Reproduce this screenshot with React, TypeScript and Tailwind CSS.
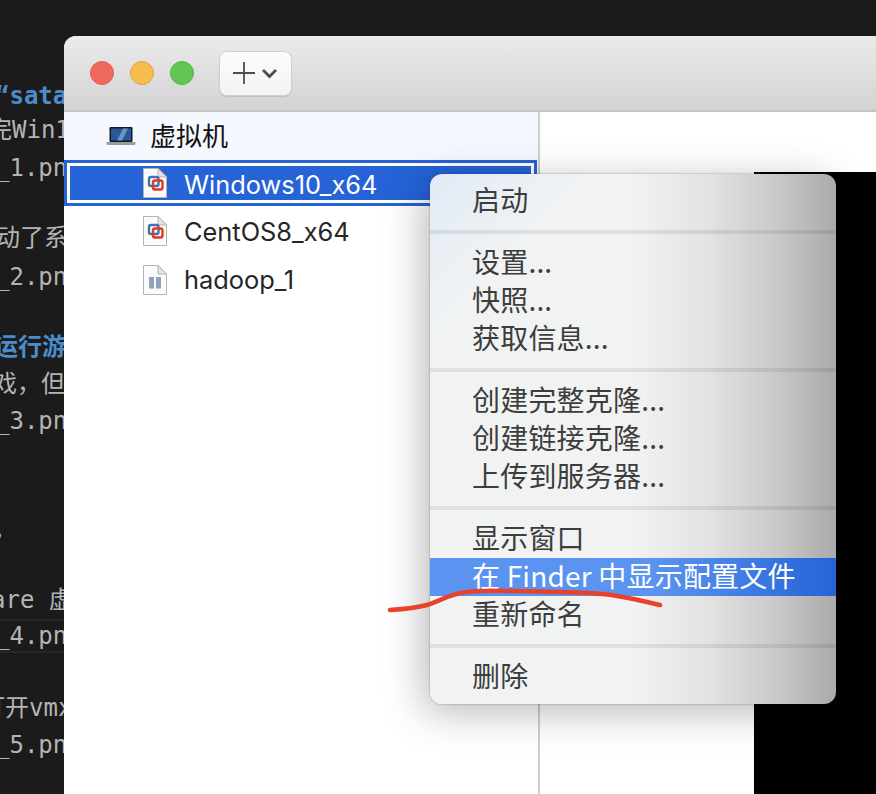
import React from "react";

const codeRows = [
  { text: "“sata", cls: "h-[34px] ml-[-5px] font-bold text-[#4a8dc8]" },
  { text: "完Win1", cls: "h-[38px] ml-[-12px] text-[#b4b4b4]" },
  { text: "_1.png", cls: "h-[70px] ml-[-5px] text-[#b4b4b4]" },
  { text: "动了系", cls: "h-[39px] ml-[-4px] text-[#b4b4b4]" },
  { text: "_2.png", cls: "h-[70px] ml-[-5px] text-[#b4b4b4]" },
  { text: "运行游", cls: "h-[37px] ml-[-6px] font-bold text-[#4a8dc8]" },
  { text: "戏，但", cls: "h-[37px] ml-[-7px] text-[#b4b4b4]" },
  { text: "_3.png", cls: "h-[109px] ml-[-5px] text-[#b4b4b4]" },
  { text: ",", cls: "h-[70px] ml-[-8px] text-[#b4b4b4]" },
  { text: "are 虚", cls: "h-[36px] ml-[-9px] text-[#b4b4b4]" },
  { text: "_4.png", cls: "h-[72px] ml-[-5px] text-[#b4b4b4]", current: true },
  { text: "打开vmx", cls: "h-[37px] ml-[-19px] text-[#b4b4b4]" },
  { text: "_5.png", cls: "h-[37px] ml-[-5px] text-[#b4b4b4]" },
];

const menuGroups = [
  ["启动"],
  ["设置...", "快照...", "获取信息..."],
  ["创建完整克隆...", "创建链接克隆...", "上传到服务器..."],
  ["显示窗口", "在 Finder 中显示配置文件", "重新命名"],
  ["删除"],
];

const FileIcon = ({ kind }: { kind: "vm" | "paused" }) => (
  <svg width="26" height="32" viewBox="0 0 26 32" className="shrink-0">
    <path d="M1.5 1.5H16L24.5 10V30.5H1.5Z" fill="#fbfbfb" stroke="#b4b4b4" />
    <path d="M16 1.5V10H24.5Z" fill="#e4e4e4" stroke="#b4b4b4" />
    {kind === "vm" ? (
      <>
        <rect x="7" y="10" width="9.5" height="9" rx="2" fill="none" stroke="#3f6fb5" strokeWidth="2.4" />
        <rect x="11" y="13.5" width="9.5" height="9" rx="2" fill="none" stroke="#e2391f" strokeWidth="2.4" />
      </>
    ) : (
      <>
        <rect x="7" y="13" width="5" height="11.5" fill="#8ea3be" />
        <rect x="14" y="13" width="5" height="11.5" fill="#8ea3be" />
      </>
    )}
  </svg>
);

const LaptopIcon = () => (
  <svg width="30" height="20" viewBox="0 0 30 20" className="shrink-0">
    <rect x="3.5" y="1" width="23" height="15" rx="1.2" fill="#14181f" />
    <rect x="5" y="2.5" width="20" height="12" fill="#27589c" />
    <path d="M11 14.5L17 2.5H22L16 14.5Z" fill="#6f93c0" />
    <path d="M0.5 16H29.5V17.5Q29.5 19 28 19H2Q0.5 19 0.5 17.5Z" fill="#9a9da0" />
  </svg>
);

const PlusChevron = () => (
  <svg width="46" height="24" viewBox="0 0 46 24" fill="none" stroke="#4c4c4c">
    <path d="M0 12H22M11 1V23" strokeWidth="1.8" />
    <path d="M30 9L36.5 15.5L43 9" strokeWidth="2.8" />
  </svg>
);

export default function App() {
  return (
    <div className="relative flex h-[794px] w-[876px] overflow-hidden bg-[#1b1b1b] font-['Noto_Sans_CJK_SC',sans-serif]">
      {/* editor behind the window */}
      <div className="w-[64px] shrink-0 overflow-hidden pt-[79px] font-['DejaVu_Sans_Mono','Noto_Sans_CJK_SC',monospace] text-[24px] leading-[34px]">
        {codeRows.map((row) => (
          <div key={row.text} className={`whitespace-nowrap ${row.cls}`}>
            {row.current ? (
              <div className="ml-[5px] h-[34px] border-y-2 border-[#262626] leading-[30px]">
                <span className="ml-[-5px]">{row.text}</span>
              </div>
            ) : (
              row.text
            )}
          </div>
        ))}
      </div>

      {/* vm window */}
      <div className="mt-[36px] flex w-[812px] shrink-0 flex-col overflow-hidden rounded-tl-[12px] bg-white">
        <div className="flex h-[76px] shrink-0 items-center border-b-2 border-[#c4c4c4] bg-gradient-to-b from-[#ebebeb] to-[#d3d3d3] pl-[26px]">
          <div className="h-[24px] w-[24px] rounded-full border border-[#e2594f] bg-[#f0695f]" />
          <div className="ml-[16px] h-[24px] w-[24px] rounded-full border border-[#e0a53c] bg-[#f6bd4f]" />
          <div className="ml-[16px] h-[24px] w-[24px] rounded-full border border-[#55b449] bg-[#62c655]" />
          <div className="ml-[25px] flex h-[45px] w-[73px] items-center justify-center rounded-[8px] border border-[#cfcfcf] bg-gradient-to-b from-[#fcfcfc] to-[#f3f3f3] shadow-[0_1px_1px_rgba(0,0,0,0.12)]">
            <PlusChevron />
          </div>
        </div>

        <div className="flex flex-1">
          <div className="w-[476px] shrink-0 border-r-2 border-[#cfcfcf] bg-white text-[26px] text-[#262626]">
            <div className="flex h-[48px] items-center bg-[#f5f8fe] pl-[42px]">
              <LaptopIcon />
              <span className="ml-[14px] pb-[2px] leading-[30px] text-[#111]">虚拟机</span>
            </div>
            <div className="mr-[1px] h-[46px] border-[3px] border-[#2563d6] bg-white p-[3px]">
              <div className="flex h-[34px] items-center bg-[#2563d6] pl-[72px] font-['Inter','Noto_Sans_CJK_SC',sans-serif] text-[25.4px] text-white">
                <FileIcon kind="vm" />
                <span className="ml-[16px] pt-[4px]">Windows10_x64</span>
              </div>
            </div>
            <div className="flex h-[50px] items-center pl-[78px] font-['Inter','Noto_Sans_CJK_SC',sans-serif] text-[25.4px]">
              <FileIcon kind="vm" />
              <span className="ml-[16px] pt-[3px]">CentOS8_x64</span>
            </div>
            <div className="flex h-[48px] items-center pl-[78px] font-['Inter','Noto_Sans_CJK_SC',sans-serif] text-[25.4px]">
              <FileIcon kind="paused" />
              <span className="ml-[16px]">hadoop_1</span>
            </div>
          </div>
          <div className="flex flex-1 flex-col pl-[214px] pt-[60px]">
            <div className="flex-1 bg-black" />
          </div>
        </div>
      </div>

      {/* context menu */}
      <div className="absolute left-[430px] top-[174px] w-[406px] rounded-[12px] bg-[linear-gradient(135deg,rgba(222,232,248,0.8)_0%,rgba(240,243,243,0)_18%),linear-gradient(to_right,#f1f3f3_0%,#f1f3f3_50%,#e2e3e3_68%,#c9cac9_85%,#a9aaa9_100%)] py-[8px] text-[28px] leading-[34px] tracking-[0.2px] text-[#3d3d3d] shadow-[-6px_8px_40px_rgba(0,0,0,0.28),0_0_2px_rgba(0,0,0,0.4)]">
        {menuGroups.map((group, i) => (
          <div key={group[0]}>
            {i > 0 && (
              <div className="flex h-[24px] items-center">
                <div className="h-[4px] w-full bg-[#000]/8" />
              </div>
            )}
            {group.map((item) => (
              <div
                key={item}
                className={
                  item.includes("Finder")
                    ? "h-[38px] whitespace-nowrap bg-gradient-to-r from-[#5b94f0] from-[55%] to-[#2563d6] pl-[42px] text-white"
                    : "h-[38px] whitespace-nowrap pl-[42px]"
                }
              >
                {item}
              </div>
            ))}
          </div>
        ))}
      </div>

      {/* red pen mark */}
      <svg className="absolute left-0 top-0" width="876" height="794" fill="none">
        <path
          d="M390 610C405 609 416 608 427 605C442 600 452 593 467 592C485 590 505 591 520 591C550 592 580 592 603 594C625 596 645 602 660 605"
          stroke="#e8412c"
          strokeWidth="4.5"
          strokeLinecap="round"
        />
      </svg>
    </div>
  );
}
